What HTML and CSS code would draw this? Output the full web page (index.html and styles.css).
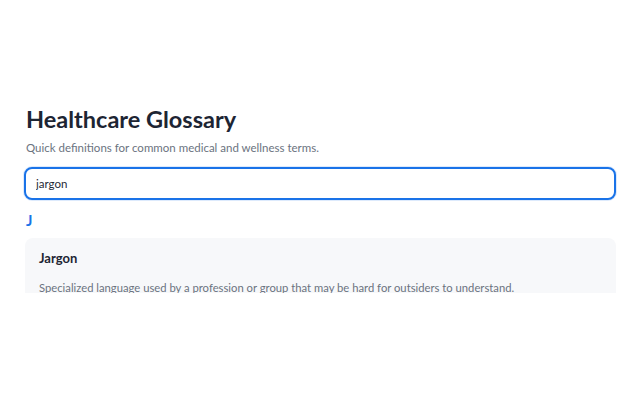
FILE: index.html
```html
<!DOCTYPE html>
<html lang="en">
<head>
<meta charset="utf-8">
<title>Healthcare Glossary</title>
<link rel="stylesheet" href="styles.css">
</head>
<body>
  <main class="glossary">
    <h1 class="glossary-title">Healthcare Glossary</h1>
    <p class="glossary-lead">Quick definitions for common medical and wellness terms.</p>
    <input class="search" type="text" value="jargon" aria-label="Search terms">
    <section class="letter-group">
      <h2 class="letter">J</h2>
      <div class="results">
        <article class="term">
          <h3 class="term-name">Jargon</h3>
          <p class="term-def">Specialized language used by a profession or group that may be hard for outsiders to understand.</p>
        </article>
      </div>
    </section>
  </main>
</body>
</html>
```

FILE: styles.css
```css
* { box-sizing: border-box; }

html, body {
  margin: 0;
  background: #ffffff;
}

body {
  font-family: "Lato", "Inter", sans-serif;
  color: #1f2a37;
}

.glossary {
  padding: 104px 24px 0;
  display: flex;
  flex-direction: column;
}

.glossary-title {
  margin: 0 0 0 2px;
  font-size: 23.5px;
  line-height: 30px;
  font-weight: 700;
  color: #1d2533;
}

.glossary-lead {
  margin: 6px 0 0 2px;
  font-size: 11.5px;
  line-height: 16px;
  color: #6b7380;
}

.search {
  margin-top: 11px;
  height: 33px;
  width: 100%;
  padding: 0 10px;
  font: inherit;
  font-size: 11.5px;
  color: #1f2a37;
  border: 2px solid #1a73e8;
  border-radius: 8px;
  outline: none;
  box-shadow: 0 0 0 1px rgba(26, 115, 232, 0.15);
}

.letter-group {
  display: flex;
  flex-direction: column;
}

.letter {
  margin: 10px 0 0 2px;
  font-size: 15px;
  line-height: 20px;
  font-weight: 700;
  color: #1a73e8;
}

.results {
  margin-top: 8px;
  margin-left: 1px;
  height: 55px;
  overflow: hidden;
}

.term {
  background: #f7f8fa;
  border-radius: 8px;
  padding: 12px 14px 14px;
}

.term-name {
  margin: 0;
  font-size: 13px;
  line-height: 16px;
  font-weight: 700;
  color: #1d2533;
}

.term-def {
  margin: 14px 0 0;
  font-size: 11.25px;
  line-height: 16px;
  color: #6b7380;
}
```
